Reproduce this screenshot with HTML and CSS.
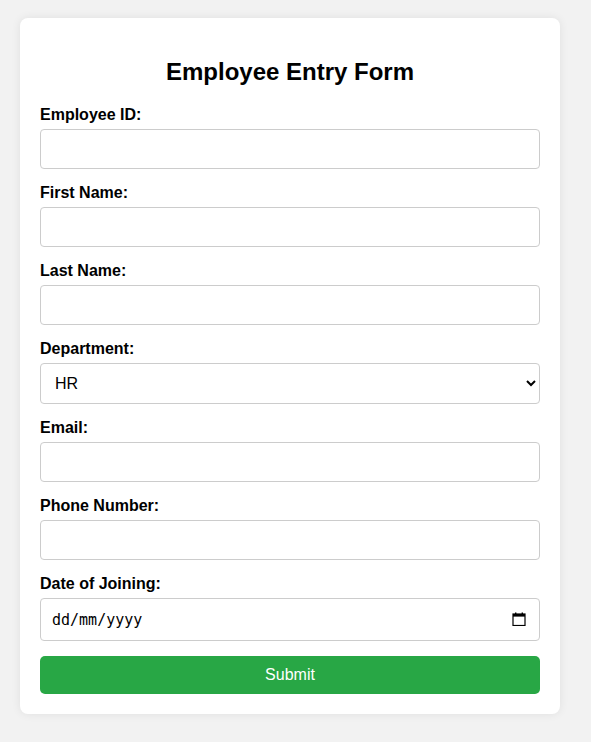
FILE: index.html
```html
<!DOCTYPE html>
<html lang="en-GB">
<head>
<meta charset="utf-8">
<title>Employee Entry Form</title>
<link rel="stylesheet" href="styles.css">
</head>
<body>
<div class="card">
  <h2 class="title">Employee Entry Form</h2>
  <form class="form">
    <label class="label" for="empid">Employee ID:</label>
    <input class="field" type="text" id="empid">
    <label class="label" for="fname">First Name:</label>
    <input class="field" type="text" id="fname">
    <label class="label" for="lname">Last Name:</label>
    <input class="field" type="text" id="lname">
    <label class="label" for="dept">Department:</label>
    <select class="field select" id="dept">
      <option>HR</option>
      <option>IT</option>
      <option>Finance</option>
    </select>
    <label class="label" for="email">Email:</label>
    <input class="field" type="email" id="email">
    <label class="label" for="phone">Phone Number:</label>
    <input class="field" type="tel" id="phone">
    <label class="label" for="doj">Date of Joining:</label>
    <div class="date-wrap">
      <input class="field date" type="text" id="doj" placeholder="dd/mm/yyyy">
      <svg class="cal-icon" width="14" height="14" viewBox="0 0 14 14" aria-hidden="true">
        <rect x="1" y="2" width="12" height="11.5" fill="none" stroke="#000" stroke-width="1.2"/>
        <rect x="1" y="2" width="12" height="2.6" fill="#000"/>
        <rect x="3" y="0.5" width="1.4" height="2" fill="#000"/>
        <rect x="9.6" y="0.5" width="1.4" height="2" fill="#000"/>
      </svg>
    </div>
    <button class="submit" type="button">Submit</button>
  </form>
</div>
</body>
</html>
```
FILE: styles.css
```css
html, body {
  margin: 0;
  padding: 0;
}
body {
  background: #f2f2f2;
  font-family: "Liberation Sans", Arial, sans-serif;
  padding: 18px 0 20px 20px;
}
.card {
  width: 500px;
  background: #fff;
  padding: 20px;
  border-radius: 8px;
  box-shadow: 0 0 10px rgba(0, 0, 0, 0.08);
}
.title {
  text-align: center;
  font-size: 24px;
  font-weight: bold;
  margin: 20px 0 20px;
  line-height: 28px;
  color: #000;
}
.form {
  display: flex;
  flex-direction: column;
}
.label {
  display: block;
  font-weight: bold;
  font-size: 16px;
  line-height: 18px;
  margin-bottom: 5px;
  color: #000;
}
.field {
  box-sizing: border-box;
  width: 100%;
  height: 40px;
  padding: 10px;
  margin: 0 0 15px;
  border: 1px solid #ccc;
  border-radius: 4px;
  font-family: "Liberation Sans", Arial, sans-serif;
  font-size: 16px;
  background: #fff;
  color: #000;
}
.select {
  height: 41px;
}
.date-wrap {
  position: relative;
  margin-bottom: 15px;
}
.date {
  display: block;
  height: 43px;
  margin: 0;
  padding: 10px 11px;
  font-family: "DejaVu Sans Mono", monospace;
  font-size: 15px;
}
.date::placeholder {
  color: #000;
  opacity: 1;
}
.cal-icon {
  position: absolute;
  right: 14px;
  top: 14px;
}
.submit {
  box-sizing: border-box;
  width: 100%;
  height: 38px;
  border: none;
  border-radius: 5px;
  background: #28a745;
  color: #fff;
  font-family: "Liberation Sans", Arial, sans-serif;
  font-size: 16px;
  cursor: pointer;
}
```
